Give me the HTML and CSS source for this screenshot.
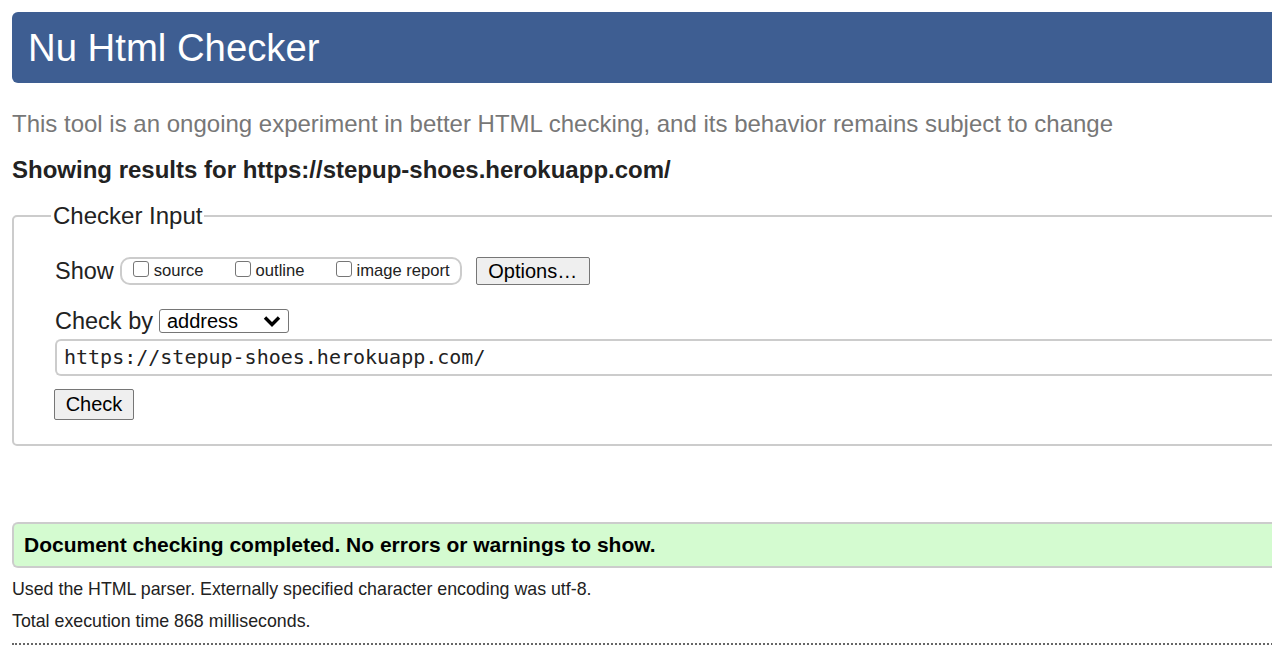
FILE: index.html
```html
<!DOCTYPE html>
<html>
<head>
<meta charset="utf-8">
<title>Nu Html Checker</title>
<link rel="stylesheet" href="styles.css">
</head>
<body>
<div class="page">
  <h1 class="title">Nu Html Checker</h1>
  <p class="tagline">This tool is an ongoing experiment in better HTML checking, and its behavior remains subject to change</p>
  <p class="showing">Showing results for https://stepup-shoes.herokuapp.com/</p>
  <fieldset class="input-box">
    <legend class="legend">Checker Input</legend>
    <div class="row show-row">
      <span class="label">Show</span>
      <span class="pill">
        <label class="opt"><span class="cb"></span>source</label>
        <label class="opt"><span class="cb"></span>outline</label>
        <label class="opt"><span class="cb"></span>image report</label>
      </span>
      <span class="btn options">Options…</span>
    </div>
    <div class="row by-row">
      <span class="label">Check by</span>
      <span class="select">address
        <svg class="chev" width="20" height="14" viewBox="0 0 20 14"><path d="M3 3.5 L10 10.5 L17 3.5" fill="none" stroke="#000" stroke-width="3.4"/></svg>
      </span>
    </div>
    <div class="url">https://stepup-shoes.herokuapp.com/</div>
    <span class="btn check">Check</span>
  </fieldset>
  <div class="success">Document checking completed. No errors or warnings to show.</div>
  <p class="info">Used the HTML parser. Externally specified character encoding was utf-8.</p>
  <p class="info">Total execution time 868 milliseconds.</p>
  <div class="dots"></div>
</div>
</body>
</html>
```

FILE: styles.css
```css
html, body {
  margin: 0;
  padding: 0;
  background: #fff;
  overflow: hidden;
}
body {
  font-family: "Liberation Sans", Arial, sans-serif;
  color: #222;
}
.page {
  width: 1300px;
  padding: 12px 0 0 12px;
}
.title {
  margin: 0;
  height: 71px;
  box-sizing: border-box;
  background: #3e5e92;
  color: #fff;
  font-weight: normal;
  font-size: 38.3px;
  line-height: 71px;
  padding-left: 16px;
  border-radius: 6px 0 0 6px;
}
.tagline {
  margin: 27px 0 0 0;
  font-size: 24px;
  line-height: 28px;
  color: #777;
}
.showing {
  margin: 18px 0 0 0;
  font-size: 24px;
  line-height: 28px;
  font-weight: bold;
  color: #222;
}
.input-box {
  margin: 18px 0 0 0;
  border: 2px solid #ccc;
  border-radius: 5px;
  padding: 26px 0 24px 41px;
  min-width: 0;
}
.legend {
  font-size: 24px;
  color: #222;
  padding: 0 2px;
  margin-left: -4px;
}
.row {
  display: flex;
  align-items: center;
}
.label {
  font-size: 23.5px;
  color: #222;
}
.show-row {
  height: 30px;
}
.pill {
  display: inline-flex;
  align-items: center;
  margin-left: 6px;
  height: 28px;
  box-sizing: border-box;
  border: 2px solid #ccc;
  border-radius: 10px;
  padding: 0 10px 0 11px;
  font-size: 16.6px;
  color: #222;
}
.opt {
  display: inline-flex;
  align-items: center;
  margin-right: 31px;
}
.opt:last-child {
  margin-right: 0;
}
.cb {
  width: 16px;
  height: 16px;
  box-sizing: border-box;
  border: 1px solid #767676;
  border-radius: 3px;
  margin: -5px 5px 0 0;
  background: #fff;
}
.btn {
  display: inline-flex;
  align-items: center;
  justify-content: center;
  box-sizing: border-box;
  background: #efefef;
  border: 1.5px solid #767676;
  border-radius: 2px;
  font-size: 20px;
  color: #000;
}
.options {
  margin-left: 14px;
  width: 114px;
  height: 28px;
}
.by-row {
  margin-top: 22px;
  height: 26px;
}
.select {
  display: inline-flex;
  align-items: center;
  justify-content: space-between;
  margin-left: 6px;
  width: 130px;
  height: 24px;
  box-sizing: border-box;
  border: 1.5px solid #767676;
  border-radius: 3px;
  padding: 0 6px 0 7px;
  font-size: 20px;
  color: #000;
}
.url {
  margin-top: 5px;
  height: 37px;
  box-sizing: border-box;
  border: 2px solid #ccc;
  border-right: none;
  border-radius: 6px 0 0 6px;
  font-family: "DejaVu Sans Mono", "Liberation Mono", monospace;
  font-size: 20px;
  line-height: 33px;
  padding-left: 7px;
  color: #222;
}
.check {
  margin-top: 13px;
  margin-left: -1px;
  width: 80px;
  height: 31px;
}
.success {
  margin-top: 76px;
  height: 46px;
  box-sizing: border-box;
  background: #d4fbd0;
  border: 2px solid #ccc;
  border-right: none;
  border-radius: 6px 0 0 6px;
  padding-left: 10px;
  font-weight: bold;
  font-size: 21px;
  line-height: 42px;
  color: #000;
}
.info {
  margin: 10px 0 0 0;
  font-size: 17.8px;
  line-height: 22px;
  color: #222;
}
.dots {
  margin-top: 11px;
  border-top: 2px dotted #666;
}
```
